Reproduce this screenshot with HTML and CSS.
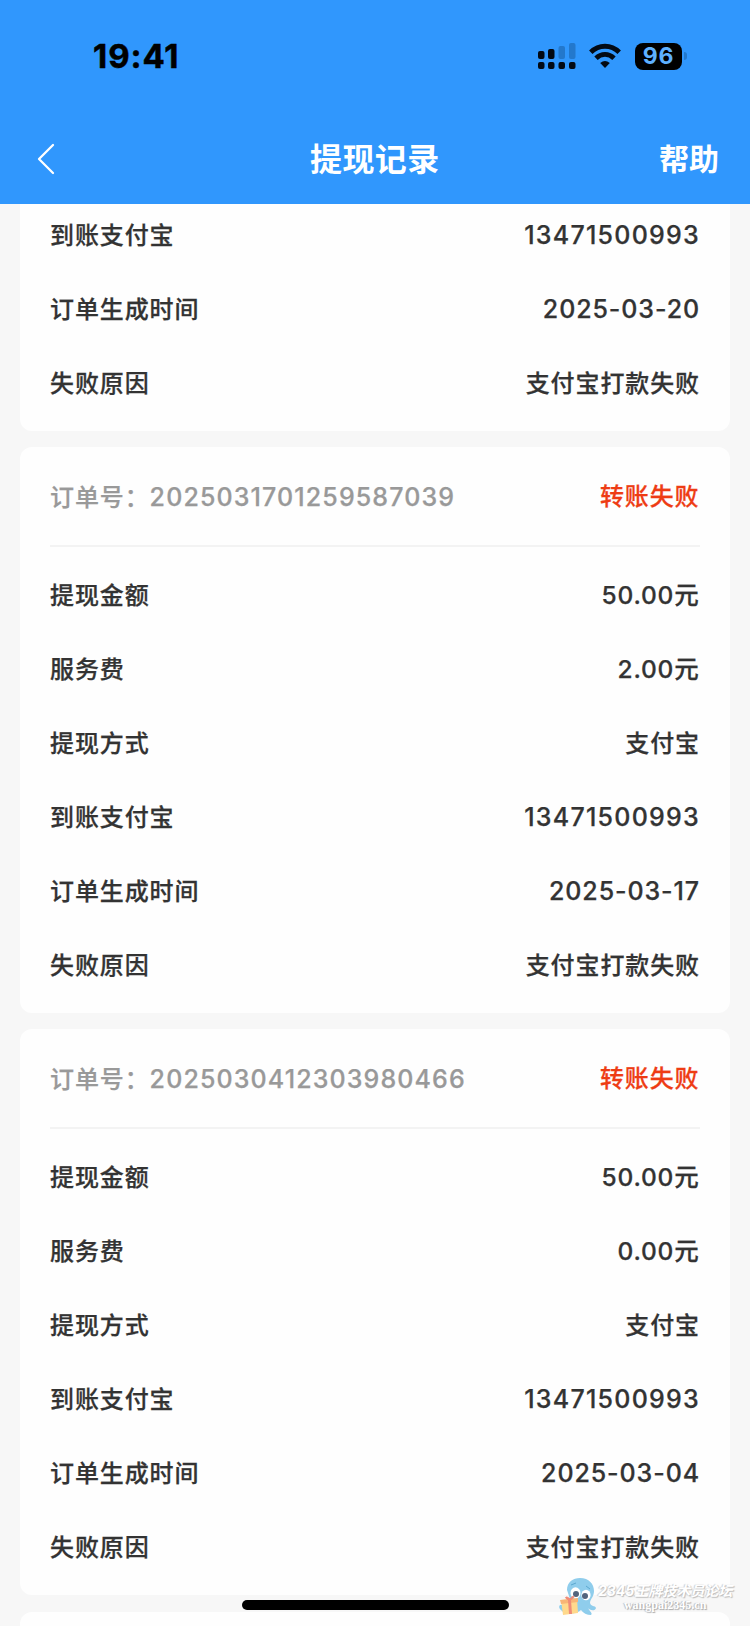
FILE: index.html
```html
<!DOCTYPE html>
<html lang="zh-CN">
<head>
<meta charset="utf-8">
<title>提现记录</title>
<link rel="stylesheet" href="styles.css">
</head>
<body>
<div class="screen">
  <header class="top">
    <div class="status">
      <span class="time">19:41</span>
      <div class="status-icons">
        <svg class="signal" width="38" height="28" viewBox="0 0 38 28">
          <g fill="#030a14"><rect x="0" y="9" width="6.500" height="8" rx="2"/><rect x="10" y="7" width="6.500" height="10" rx="2"/><rect x="0" y="20" width="6.500" height="7" rx="2"/><rect x="10" y="20" width="6.500" height="7" rx="2"/><rect x="20.500" y="20" width="6.500" height="7" rx="2"/><rect x="31" y="20" width="6.500" height="7" rx="2"/></g>
          <g fill="#2378cc"><rect x="20.500" y="4" width="6.500" height="13" rx="2"/><rect x="31" y="1" width="6.500" height="16" rx="2"/></g>
        </svg>
        <svg class="wifi" width="32" height="26" viewBox="0 0 32 26" fill="none" stroke="#030a14" stroke-width="4.800">
          <path d="M1.800 9.300C9.800 1.200 22.200 1.200 30.200 9.300"/><path d="M7 15.300C12.200 10.100 19.800 10.100 25 15.300"/><path d="M11.200 20Q16 16.200 20.800 20L16 25Z" fill="#030a14" stroke="none"/>
        </svg>
        <span class="battery">96</span>
        <span class="battery-tip"></span>
      </div>
    </div>
    <nav class="nav">
      <svg class="back" width="18" height="32" viewBox="0 0 18 32" fill="none" stroke="#fff" stroke-width="2.300" stroke-linecap="round" stroke-linejoin="round"><path d="M16 2L2 16L16 30"/></svg>
      <h1 class="title">提现记录</h1>
      <span class="help">帮助</span>
    </nav>
  </header>
  <main class="list">
    <section class="card card-first">
      <div class="row"><span>到账支付宝</span><span class="phone">13471500993</span></div>
      <div class="row"><span>订单生成时间</span><span class="date">2025-03-20</span></div>
      <div class="row"><span>失败原因</span><span>支付宝打款失败</span></div>
    </section>
    <section class="card">
      <div class="head"><span class="order">订单号：<span class="order-no">2025031701259587039</span></span><span class="failed">转账失败</span></div>
      <div class="row"><span>提现金额</span><span class="amount">50.00元</span></div>
      <div class="row"><span>服务费</span><span class="amount">2.00元</span></div>
      <div class="row"><span>提现方式</span><span>支付宝</span></div>
      <div class="row"><span>到账支付宝</span><span class="phone">13471500993</span></div>
      <div class="row"><span>订单生成时间</span><span class="date">2025-03-17</span></div>
      <div class="row"><span>失败原因</span><span>支付宝打款失败</span></div>
    </section>
    <section class="card">
      <div class="head"><span class="order">订单号：<span class="order-no">2025030412303980466</span></span><span class="failed">转账失败</span></div>
      <div class="row"><span>提现金额</span><span class="amount">50.00元</span></div>
      <div class="row"><span>服务费</span><span class="amount">0.00元</span></div>
      <div class="row"><span>提现方式</span><span>支付宝</span></div>
      <div class="row"><span>到账支付宝</span><span class="phone">13471500993</span></div>
      <div class="row"><span>订单生成时间</span><span class="date">2025-03-04</span></div>
      <div class="row"><span>失败原因</span><span>支付宝打款失败</span></div>
    </section>
    <section class="card card-next"></section>
  </main>
  <div class="home-bar"></div>
  <div class="mark">
    <svg width="40" height="40" viewBox="0 0 40 40">
      <path d="M9 13C9 5 15 1 22 1C31 1 36 7 36 14C36 20 32 22 32 26C33 30 37 28 38 31C37 35 31 33 30 31C32 35 35 36 33 38C29 38 25 36 23 33C18 38 6 37 3 33C0 31 1 27 4 28C8 29 13 27 12 22Z" fill="#8fcdec"/>
      <ellipse cx="17.500" cy="16" rx="5" ry="5.800" fill="#fff"/><ellipse cx="28" cy="18" rx="4.600" ry="5.300" fill="#fff"/>
      <circle cx="18" cy="17" r="3" fill="#53647d"/><circle cx="27" cy="19" r="3" fill="#53647d"/>
      <path d="M13 8L18 6M28 9L32 12" stroke="#5ba8d0" stroke-width="1"/>
      <path d="M3 23L19 22L20 36L5 38Z" fill="#ffd98c"/><path d="M2 23L20 21V25L3 27Z" fill="#f8b576"/>
      <path d="M10 23H13L14 37H11Z" fill="#ef8b78"/><path d="M11 23C5 21 8 18 12 22C15 17 19 20 12 23Z" fill="#ef8b78" stroke="#ef8b78"/>
    </svg>
    <div class="mark-text"><span class="mark-name">2345王牌技术员论坛</span><span class="mark-url">wangpai2345.cn</span></div>
  </div>
</div>
</body>
</html>
```
FILE: styles.css
```css
* { box-sizing: border-box; }
body { margin: 0; background: #f7f7f7; }
.screen {
  position: relative;
  width: 750px;
  height: 1626px;
  overflow: hidden;
  display: flex;
  flex-direction: column;
  font-family: Inter, "Noto Sans CJK SC", sans-serif;
  font-weight: 500;
  font-size: 24px;
  color: #333;
  background: #f7f7f7;
}
.top { flex: none; height: 204px; background: #3097fd; }
.status { height: 112px; padding: 0 63px 0 93px; display: flex; justify-content: space-between; align-items: center; }
.time { font-size: 33px; font-weight: 700; color: #000; letter-spacing: .9px; -webkit-text-stroke: .5px #000; }
.status-icons { display: flex; align-items: center; }
.wifi { margin-left: 13px; }
.battery { margin-left: 14px; width: 47px; height: 27px; border-radius: 8px; background: #000; color: #5eb0ff; font-size: 23px; font-weight: 700; line-height: 27px; text-align: center; letter-spacing: .8px; }
.battery-tip { width: 3px; height: 8px; margin-left: 2px; border-radius: 0 3px 3px 0; background: #2378cc; }
.nav { height: 92px; padding: 2px 31px 0 37px; display: grid; grid-template-columns: 270px auto 1fr; column-gap: 3px; align-items: center; color: #fff; }
.title { margin: 0; padding-top: 1px; font-size: 32px; font-weight: 600; line-height: 40px; letter-spacing: .4px; }
.help { justify-self: end; font-size: 30px; font-weight: 600; line-height: 40px; }
.list { flex: 1; min-height: 0; padding: 0 20px; display: flex; flex-direction: column; gap: 16.300px; overflow: hidden; }
.card { flex: none; height: 566px; padding: 0 30px; background: #fefefe; border-radius: 12px; }
.card-first { height: 227px; margin-bottom: -.3px; padding-bottom: 10px; border-radius: 0 0 12px 12px; display: flex; flex-direction: column; justify-content: flex-end; }
.card-next { height: 40px; }
.head { height: 100px; padding-top: 2px; margin-bottom: 12px; border-bottom: 2px solid #f3f3f3; display: flex; align-items: center; justify-content: space-between; }
.row, .head { letter-spacing: .9px; line-height: 36px; -webkit-text-stroke: .25px currentColor; }
.row { flex: none; height: 74px; display: flex; align-items: center; justify-content: space-between; }
.order { color: #999; }
.failed { color: #ee3c14; margin-right: .5px; }
.phone, .date, .amount, .order-no { font-size: 25px; }
.phone, .date, .amount { padding-bottom: 2px; }
.phone { letter-spacing: 1.250px; }
.date { letter-spacing: .9px; }
.amount { font-size: 24.500px; letter-spacing: .8px; margin-right: .5px; }
.order-no { letter-spacing: 1.120px; }
.home-bar { position: absolute; left: 242px; top: 1600px; width: 267px; height: 10px; border-radius: 5px; background: #000; }
.mark { position: absolute; left: 558px; top: 1577px; display: flex; align-items: center; }
.mark-text { display: flex; flex-direction: column; align-items: center; }
.mark-name { font-size: 14px; line-height: 17px; font-style: italic; font-weight: 700; color: #fff; text-shadow: 1px 1px 1px #bbb, -1px 0 1px #ccc; white-space: nowrap; }
.mark-url { font-family: "Liberation Serif", serif; font-size: 12px; line-height: 13px; font-weight: 700; color: #fff; text-shadow: 1px 1px 1px #aaa, -1px 0 1px #bbb; }
```
